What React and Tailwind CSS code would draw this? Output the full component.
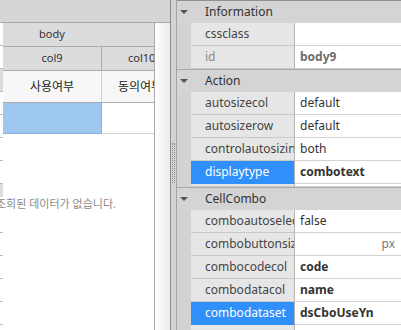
import React from 'react';

const font = { fontFamily: '"Noto Sans", "Noto Sans CJK KR", sans-serif' };

const stripRows = [
  { h: 'h-[23px]', gray: false },
  { h: 'h-[23px]', gray: false },
  { h: 'h-[23px]', gray: true },
  { h: 'h-[23px]', gray: false },
  { h: 'h-[23px]', gray: false },
  { h: 'h-[23px]', gray: false },
  { h: 'h-[23px]', gray: false },
  { h: 'h-[13px]', gray: true, noBorder: true },
  { h: 'h-[36px]', gray: false },
  { h: 'h-[23px]', gray: false },
  { h: 'h-[23px]', gray: false },
  { h: 'h-[23px]', gray: false },
  { h: 'h-[23px]', gray: false },
];

function Arrow() {
  return <span className="block w-0 h-0 border-l-[4px] border-r-[4px] border-t-[4px] border-l-transparent border-r-transparent border-t-[#555]" />;
}

function Header({ title, first }) {
  return (
    <div className={`flex h-[23px] shrink-0 items-center bg-[#d4d4d4] border-t ${first ? 'border-[#8f8f8f]' : 'border-[#a9a9a9]'}`}>
      <div className="w-[14px] flex justify-center"><Arrow /></div>
      <span className="pl-[14px] text-[12px] text-[#333]">{title}</span>
    </div>
  );
}

function Row({ name, value, bold, selected, dim, unit, h = 'h-[23px]' }) {
  return (
    <div className={`flex ${h} shrink-0 overflow-hidden`}>
      <div className="w-[14px] bg-[#d3d3d3]" />
      <div
        className={`w-[104px] shrink-0 flex items-center pl-[14px] border-r border-b border-r-[#b5b5b5] whitespace-nowrap overflow-hidden text-[12px] ${
          selected ? 'bg-[#2f8ffb] text-white border-b-[#2f8ffb]' : 'bg-[#e6e6e6] border-b-[#c9c9c9]'
        } ${dim ? 'text-[#8a8a8a]' : selected ? '' : 'text-[#444]'}`}
      >
        {name}
      </div>
      <div className={`flex-1 flex items-center pl-[5px] pr-[6px] bg-white border-b border-[#d3d3d3] text-[12px] whitespace-nowrap ${bold ? 'font-bold' : ''} ${dim ? 'text-[#6e6e6e]' : 'text-[#333]'}`}>
        <span className="flex-1">{value}</span>
        {unit && <span className="text-[#777]">{unit}</span>}
      </div>
    </div>
  );
}

export default function App() {
  return (
    <div className="w-[401px] h-[330px] flex overflow-hidden bg-white" style={font}>
      {/* grid preview */}
      <div className="w-[171px] shrink-0 flex flex-col border-r border-[#8e8e8e] overflow-hidden">
        <div className="h-[23px] shrink-0 bg-[#d6d6d6] border-b border-[#a8a8a8]" />
        <div className="flex flex-1">
          <div className="w-[3px] shrink-0 flex flex-col">
            {stripRows.map((r, i) => (
              <div key={i} className={`${r.h} shrink-0 ${r.gray ? 'bg-[#dcdcdc]' : 'bg-white'} ${r.noBorder ? '' : 'border-b border-[#bdbdbd]'}`} />
            ))}
          </div>
          <div className="w-[152px] shrink-0 flex flex-col border-r border-[#a8a8a8]">
            <div className="h-[24px] shrink-0 flex items-center pl-[36px] bg-[#dcdcdc] border-b border-[#ababab] text-[11px] text-[#333]">body</div>
            <div className="h-[24px] shrink-0 flex bg-[#dcdcdc] border-b border-[#ababab] text-[11px] text-[#333]">
              <div className="w-[99px] flex items-center justify-center border-r border-[#ababab]">col9</div>
              <div className="flex-1 flex items-center pl-[26px] whitespace-nowrap overflow-hidden">col10</div>
            </div>
            <div className="h-[32px] shrink-0 flex bg-[#f7f7f7] border-b border-[#ababab] text-[12px] text-[#222]">
              <div className="w-[99px] flex items-center justify-center border-r border-[#d0d0d0]">사용여부</div>
              <div className="flex-1 flex items-center pl-[16px] whitespace-nowrap overflow-hidden">동의여부</div>
            </div>
            <div className="h-[31px] shrink-0 flex">
              <div className="w-[99px] bg-[#9fc8f1] border-r border-b border-[#86b1e0]" />
              <div className="flex-1 bg-white border-b border-[#d3d3d3]" />
            </div>
            <div className="mt-[62px] ml-[-7px] text-[11px] leading-[16px] text-[#8a8a8a] whitespace-nowrap">조회된 데이터가 없습니다.</div>
          </div>
          <div className="flex-1 bg-gradient-to-r from-white to-[#ebebeb]" />
        </div>
      </div>

      {/* splitter */}
      <div className="w-[6px] shrink-0 bg-[#d3d3d3] border-r border-[#a5a5a5] flex flex-col items-center pt-[143px]">
        <div className="w-[3px] h-[40px] border-x border-dotted border-[#8c8c8c]" />
      </div>

      {/* property grid */}
      <div className="flex-1 flex flex-col overflow-hidden">
        <Header title="Information" first />
        <Row name="cssclass" value="" />
        <Row name="id" value="body9" bold dim />
        <Header title="Action" />
        <Row name="autosizecol" value="default" />
        <Row name="autosizerow" value="default" />
        <Row name="controlautosizing" value="both" />
        <Row name="displaytype" value="combotext" bold selected />
        <Row name="" value="" h="h-[3px]" />
        <Header title="CellCombo" />
        <Row name="comboautoselect" value="false" />
        <Row name="combobuttonsize" value="" unit="px" />
        <Row name="combocodecol" value="code" bold />
        <Row name="combodatacol" value="name" bold />
        <Row name="combodataset" value="dsCboUseYn" bold selected />
        <Row name="combodisplay" value="blankdata" bold />
      </div>
    </div>
  );
}
